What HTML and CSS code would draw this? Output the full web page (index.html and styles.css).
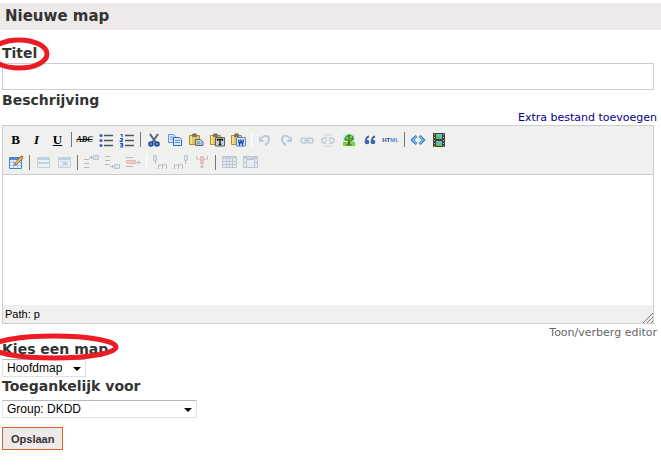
FILE: index.html
```
<!DOCTYPE html>
<html lang="nl">
<head>
<meta charset="utf-8">
<title>Nieuwe map</title>
<link rel="stylesheet" href="styles.css">
</head>
<body>
<h1 class="page-title">Nieuwe map</h1>
<form class="form">
  <div class="label-row">
    <label class="label" for="title">Titel</label>
    <svg class="ring ring-title" viewBox="0 0 56 34" aria-hidden="true"><ellipse cx="27" cy="17" rx="28" ry="14"/></svg>
  </div>
  <input class="title-input" id="title" type="text">
  <label class="label label-description" for="description">Beschrijving</label>
  <div class="extra"><a class="extra-link" href="#">Extra bestand toevoegen</a></div>

  <div class="editor">
    <div class="toolbars">
      <div class="toolbar">
        <button type="button" class="tool" aria-label="Vet"><span class="glyph bold">B</span></button>
        <button type="button" class="tool" aria-label="Cursief"><span class="glyph italic">I</span></button>
        <button type="button" class="tool" aria-label="Onderstreept"><span class="glyph underline">U</span></button>
        <span class="sep"></span>
        <button type="button" class="tool" aria-label="Doorhalen"><span class="strike">ABC</span></button>
        <button type="button" class="tool" aria-label="Opsomming"><svg viewBox="0 0 16 16"><path d="M6 3.500h9M6 8.500h9M6 13.500h9" stroke="#4d5560" stroke-width="1.300"/><g fill="#3a62b8"><circle cx="3" cy="3.500" r="1.600"/><circle cx="3" cy="8.500" r="1.600"/><circle cx="3" cy="13.500" r="1.600"/></g></svg></button>
        <button type="button" class="tool" aria-label="Nummering"><svg viewBox="0 0 16 16"><path d="M6 3.500h9M6 8.500h9M6 13.500h9" stroke="#4d5560" stroke-width="1.300"/><path d="M1.500 2.500H3V5M1 6.500h2.500v1L1.500 9.500h2.500M1 11.500h2.500v3.500H1M1.500 13.200h2" fill="none" stroke="#2450c8" stroke-width="1.200"/></svg></button>
        <span class="sep"></span>
        <button type="button" class="tool" aria-label="Knippen"><svg viewBox="0 0 16 16"><path d="M4 2l5.500 8M12 2l-5.500 8" stroke="#50647c" stroke-width="2"/><g fill="none" stroke="#1c4a9c" stroke-width="2"><circle cx="5" cy="12" r="1.800"/><circle cx="11" cy="12" r="1.800"/></g></svg></button>
        <button type="button" class="tool" aria-label="Kopiëren"><svg viewBox="0 0 16 16"><path d="M1.500 2.500h5l2 2v6h-7z" fill="#d9e8ff" stroke="#6992d3"/><path d="M3 5h4M3 7h4" stroke="#79a5e6"/><path d="M6.500 5.500h6l2 2v6h-8z" fill="#d9e8ff" stroke="#3263b4"/><path d="M8 8.500h5M8 10.500h5" stroke="#5a8fdc"/></svg></button>
        <button type="button" class="tool" aria-label="Plakken"><svg viewBox="0 0 16 16"><use href="#clipboard"/><path d="M7.500 7.500h5l2.500 2.500v3.500H7.500z" fill="#c4d0de" stroke="#526880"/><path d="M9 10h3M9 11.800h4" stroke="#7189a3"/></svg></button>
        <button type="button" class="tool" aria-label="Plakken als tekst"><svg viewBox="0 0 16 16"><use href="#clipboard"/><path d="M6.500 5.500h9v8.500h-9z" fill="#c9ced5" stroke="#555e6a"/><path d="M8.500 8.800V7.500h5v1.300M11 7.500V12.500M9.800 12.500h2.400" fill="none" stroke="#111" stroke-width="1.300"/></svg></button>
        <button type="button" class="tool" aria-label="Plakken uit Word"><svg viewBox="0 0 16 16"><use href="#clipboard"/><path d="M6.500 5.500h9v8.500h-9z" fill="#d9e7fc" stroke="#5a89ca"/><path d="M8.500 7.500l1 5 1.500-4 1.500 4 1-5" fill="none" stroke="#1c50a8" stroke-width="1.400"/></svg></button>
        <span class="sep sep-light"></span>
        <button type="button" class="tool" disabled aria-label="Ongedaan maken"><svg viewBox="0 0 16 16"><path d="M4.500 6C8 2 12.500 4 12 8c-.4 2-2 4-4 5" fill="none" stroke="#6084c0" stroke-width="2"/><path d="M2 4v6h6z" fill="#6084c0"/></svg></button>
        <button type="button" class="tool" disabled aria-label="Opnieuw"><svg viewBox="0 0 16 16"><path d="M11.500 6C8 2 3.500 4 4 8c.4 2 2 4 4 5" fill="none" stroke="#6084c0" stroke-width="2"/><path d="M14 4v6H8z" fill="#6084c0"/></svg></button>
        <button type="button" class="tool" disabled aria-label="Link"><svg viewBox="0 0 16 16"><g fill="none" stroke="#7088ac" stroke-width="1.600"><rect x="2" y="6" width="6" height="5" rx="2.500"/><rect x="8" y="6" width="6" height="5" rx="2.500"/><path d="M5 8.500h6"/></g></svg></button>
        <button type="button" class="tool" disabled aria-label="Link verwijderen"><svg viewBox="0 0 16 16"><g fill="none" stroke="#7088ac" stroke-width="1.500"><path d="M7 6H4Q2 6 2 8.500T4 11h2M9 6h3q2 0 2 2.500T12 11H9M5 8.500h2M9 8.500h2"/><path d="M4 2l2 2M8 1v3M12 2l-2 2M4 15l2-2M8 16v-3M12 15l-2-2" stroke-width="1"/></g></svg></button>
        <button type="button" class="tool" aria-label="Afbeelding"><svg viewBox="0 0 16 16"><path d="M2 2h12v12H2z" fill="#cce8f5"/><path d="M2 10h12v4H2z" fill="#7ad23c"/><path d="M7 8h2v5H7z" fill="#804e20"/><path d="M3 7l2-3 3-2 4 2 1 3-2 2.500H9L7 9l-3-.5z" fill="#3a982a"/><path d="M5 5h2v2H5zM9 4h2v2H9zM8 7h2v1H8z" fill="#8ccc4c"/><path d="M5 13h6" stroke="#2c7a1d"/></svg></button>
        <button type="button" class="tool" aria-label="Citaat"><svg viewBox="0 0 16 16"><g fill="#3e65a7"><circle cx="5" cy="10" r="2.300"/><circle cx="11" cy="10" r="2.300"/></g><path d="M7 4.500Q4 5 3.500 10M13 4.500Q10 5 9.500 10" fill="none" stroke="#3e65a7" stroke-width="1.800"/></svg></button>
        <button type="button" class="tool" aria-label="HTML bewerken"><span class="html"><span class="html-dark">HT</span>ML</span></button>
        <span class="sep"></span>
        <button type="button" class="tool" aria-label="Broncode"><svg viewBox="0 0 16 16"><path d="M6.500 4L2.500 8l4 4M9.500 4l4 4-4 4" fill="none" stroke="#3b7fc0" stroke-width="3"/><path d="M6.500 4.500L3 8l3.500 3.500M9.500 4.500L13 8l-3.500 3.500" fill="none" stroke="#84c0ec" stroke-width="1.300"/></svg></button>
        <button type="button" class="tool" aria-label="Media"><svg viewBox="0 0 16 16"><path d="M2 1h12v14H2z" fill="#414141"/><path d="M5 2h6v5H5zM5 9h6v5H5z" fill="#62bec8"/><path d="M5 3l6 4H5zM5 10l6 4H5z" fill="#64bd47"/><path d="M3.500 2v13M12.500 2v13" stroke="#bbb" stroke-dasharray="1 2"/></svg></button>
      </div>
      <div class="toolbar toolbar-table">
        <button type="button" class="tool" aria-label="Tabel"><svg viewBox="0 0 16 16"><path d="M1.500 3.500h12v11h-12z" fill="#e8f2ff" stroke="#4c7fc7"/><path d="M2 4h11v2H2z" fill="#568ad0"/><path d="M5.500 6v8M9.500 6v8M2 8.500h11M2 11.500h11" stroke="#a8c5ed"/><path d="M6.500 11.500L7 9l6-7 2 2-6 6z" fill="#f0c653" stroke="#826744"/><path d="M12 3l2-2 1.500 1.500-1.500 2z" fill="#df735d"/></svg></button>
        <span class="sep"></span>
        <button type="button" class="tool" disabled aria-label="Rij-eigenschappen"><svg viewBox="0 0 16 16"><path d="M2.500 3.500h12v10h-12z" fill="#edf3fc" stroke="#7795c0"/><path d="M3 4h11v2H3zM3 8h11v2H3z" fill="#6c94cc"/></svg></button>
        <button type="button" class="tool" disabled aria-label="Cel-eigenschappen"><svg viewBox="0 0 16 16"><path d="M2.500 3.500h12v10h-12z" fill="#edf3fc" stroke="#7795c0"/><path d="M3 4h11v2H3zM7 8h4v3H7z" fill="#6c94cc"/><path d="M6.500 6v7M11.500 6v7M3 7.500h11M3 11.500h11" stroke="#b5c7e2"/></svg></button>
        <span class="sep"></span>
        <button type="button" class="tool" disabled aria-label="Rij erboven"><svg viewBox="0 0 16 16"><path d="M1 5.500h5M1 9.500h5M1 13.500h5M6 3.500h4M8.500 2v3" stroke="#555"/><path d="M10.500 1.500h5v4h-5z" fill="#a9c8f2" stroke="#5680bd"/></svg></button>
        <button type="button" class="tool" disabled aria-label="Rij eronder"><svg viewBox="0 0 16 16"><path d="M1 2.500h5M1 6.500h5M1 10.500h5M6 12.500h4M8.500 11v3" stroke="#555"/><path d="M10.500 10.500h5v4h-5z" fill="#a9c8f2" stroke="#5680bd"/></svg></button>
        <button type="button" class="tool" disabled aria-label="Rij verwijderen"><svg viewBox="0 0 16 16"><path d="M1 3.500h7M1 12.500h7M9 8.500h6M13 6.500l2 2-2 2" stroke="#555" fill="none"/><path d="M1.500 6.500h9v3h-9z" fill="#ed8d8d" stroke="#ba5656"/></svg></button>
        <span class="sep sep-light"></span>
        <button type="button" class="tool" disabled aria-label="Kolom ervoor"><svg viewBox="0 0 16 16"><path d="M1.500 1.500h3v5h-3z" fill="#a9c8f2" stroke="#5680bd"/><path d="M3.500 7v3M6.500 15v-4h8v4M10.500 11v4" fill="none" stroke="#555"/></svg></button>
        <button type="button" class="tool" disabled aria-label="Kolom erna"><svg viewBox="0 0 16 16"><path d="M11.500 1.500h3v5h-3z" fill="#a9c8f2" stroke="#5680bd"/><path d="M12.500 7v3M1.500 15v-4h8v4M5.500 11v4" fill="none" stroke="#555"/></svg></button>
        <button type="button" class="tool" disabled aria-label="Kolom verwijderen"><svg viewBox="0 0 16 16"><path d="M6.500 2.500h3v7h-3z" fill="#ed7777" stroke="#c35151"/><path d="M2.500 2v3h3M13.500 2v3h-3M8 10v4M6 12l2 2 2-2" fill="none" stroke="#555"/></svg></button>
        <span class="sep"></span>
        <button type="button" class="tool" disabled aria-label="Cellen splitsen"><svg viewBox="0 0 16 16"><path d="M1.500 2.500h14v11h-14z" fill="#d7e5fa" stroke="#5874a0"/><path d="M2 3h13v2H2z" fill="#7f9ece"/><path d="M5.500 5v8M8.500 5v8M11.500 5v8M2 7.500h13M2 10.500h13" stroke="#5874a0"/></svg></button>
        <button type="button" class="tool" disabled aria-label="Cellen samenvoegen"><svg viewBox="0 0 16 16"><path d="M1.500 2.500h14v11h-14z" fill="#d7e5fa" stroke="#5874a0"/><path d="M2 3h13v2H2z" fill="#7f9ece"/><path d="M4.500 3v10M12.500 3v10M5 5.500h7M2 8.500h2M13 8.500h2" stroke="#5874a0"/></svg></button>
      </div>
    </div>
    <textarea class="body-input" id="description"></textarea>
    <div class="status">Path: p
      <svg class="grip" viewBox="0 0 10 10" aria-hidden="true"><path d="M0 10L10 0M4 10l6-6M8 10l2-2" stroke="#777"/></svg>
    </div>
  </div>
  <div class="toggle">Toon/verberg editor</div>

  <div class="label-row">
    <label class="label" for="folder">Kies een map</label>
    <svg class="ring ring-folder" viewBox="0 0 124 28" aria-hidden="true"><ellipse cx="60" cy="14" rx="62" ry="11"/></svg>
  </div>
  <div class="select-wrap folder">
    <select class="select" id="folder"><option>Hoofdmap</option></select>
  </div>
  <label class="label label-access" for="access">Toegankelijk voor</label>
  <div class="select-wrap access">
    <select class="select" id="access"><option>Group: DKDD</option></select>
  </div>
  <button type="submit" class="save">Opslaan</button>
</form>
<svg class="defs" aria-hidden="true"><defs><g id="clipboard"><path d="M1.500 3.500h10v9h-10z" fill="#edc252" stroke="#b58a2c"/><path d="M2 4h2v8H2z" fill="#f9df8c"/><path d="M4 2h5v3H4z" fill="#7b7869"/><path d="M5 1h3v1H5z" fill="#a9a698"/></g></defs></svg>
</body>
</html>
```
FILE: styles.css
```
* { box-sizing: border-box; }

body {
  margin: 0;
  padding-top: 3px;
  background: #fff;
  color: #333;
  font-family: "DejaVu Sans", Verdana, sans-serif;
  font-size: 11px;
  overflow: hidden;
}

.page-title {
  margin: 0;
  padding: 0 5px;
  background: #eeeae9;
  font-size: 15px;
  line-height: 27px;
}

.form { padding: 14px 7px 0 2px; }

.label-row { position: relative; }

.label {
  display: block;
  font-size: 14px;
  font-weight: bold;
  line-height: 19px;
}

.ring {
  position: absolute;
  overflow: visible;
  fill: none;
  stroke: #ed1c24;
  stroke-width: 5px;
  pointer-events: none;
  z-index: 1;
}

.ring-title { left: -10px; top: -7px; width: 56px; height: 34px; }
.ring-folder { left: -8px; top: -7px; width: 124px; height: 28px; }

.title-input {
  display: block;
  width: 100%;
  height: 27px;
  border: 1px solid #ccc;
  padding: 2px 4px;
  background: #fff;
  font: inherit;
}

.label-description { line-height: 21px; }

.extra {
  line-height: 14px;
  margin-right: -3px;
  text-align: right;
}

.extra-link { color: #00008b; text-decoration: none; }

.editor { border: 1px solid #ccc; }

.toolbars {
  padding: 2px 3px 1px 2px;
  border-bottom: 1px solid #ccc;
  background: #f0f0ee;
}

.toolbar {
  display: flex;
  align-items: center;
  height: 23px;
}

.toolbar-table { height: 22px; }

.tool {
  display: flex;
  flex: none;
  align-items: center;
  justify-content: center;
  width: 21px;
  height: 20px;
  border: 0;
  padding: 0;
  background: none;
  color: #000;
}

.tool svg { flex: none; width: 16px; height: 16px; }
.tool:disabled { opacity: 0.35; }

.sep {
  flex: none;
  width: 2px;
  height: 15px;
  margin: 0 2px;
  border-right: 1px solid #777;
}

.sep-light { border-color: #fff; }

.glyph { font: bold 13px/16px "Liberation Serif", serif; }
.italic { font-style: italic; }
.underline { text-decoration: underline; }
.strike { font: italic bold 8px/12px "Liberation Serif", serif; text-decoration: line-through; }
.html { color: #5b86dd; font: bold 6px/12px "Liberation Sans", sans-serif; }
.html-dark { color: #254987; }

.body-input {
  display: block;
  width: 100%;
  height: 130px;
  border: 0;
  padding: 8px;
  background: #fff;
  resize: none;
}

.status {
  display: flex;
  align-items: center;
  justify-content: space-between;
  height: 18px;
  padding-left: 2px;
  background: #f0f0ee;
  color: #000;
  font: 11px/18px "Liberation Sans", Arial, sans-serif;
}

.grip { align-self: flex-end; width: 10px; height: 10px; }

.toggle {
  margin-right: -3px;
  padding-top: 2px;
  color: #666;
  line-height: 14px;
  text-align: right;
}

.select-wrap { position: relative; }
.folder { width: 84px; }
.access { width: 195px; }

.select-wrap::after {
  content: "";
  position: absolute;
  right: 5px;
  top: 8px;
  border: 4px solid transparent;
  border-top-color: #000;
  border-bottom: 0;
  pointer-events: none;
}

.select {
  appearance: none;
  display: block;
  width: 100%;
  height: 18px;
  border: 1px solid #dfe2e8;
  border-top-color: #b4b7be;
  border-radius: 0;
  padding: 0 4px;
  background: #fff;
  color: #000;
  font: 12px/16px "Liberation Sans", Arial, sans-serif;
}

.label-access { padding-bottom: 4px; }

.save {
  display: block;
  height: 23px;
  margin-top: 9px;
  border: 1px solid #d2622f;
  padding: 0 8px;
  background: #eeeae9;
  color: #333;
  font: bold 11px/20px "Liberation Sans", Arial, sans-serif;
}

.defs { position: absolute; width: 0; height: 0; }
```
